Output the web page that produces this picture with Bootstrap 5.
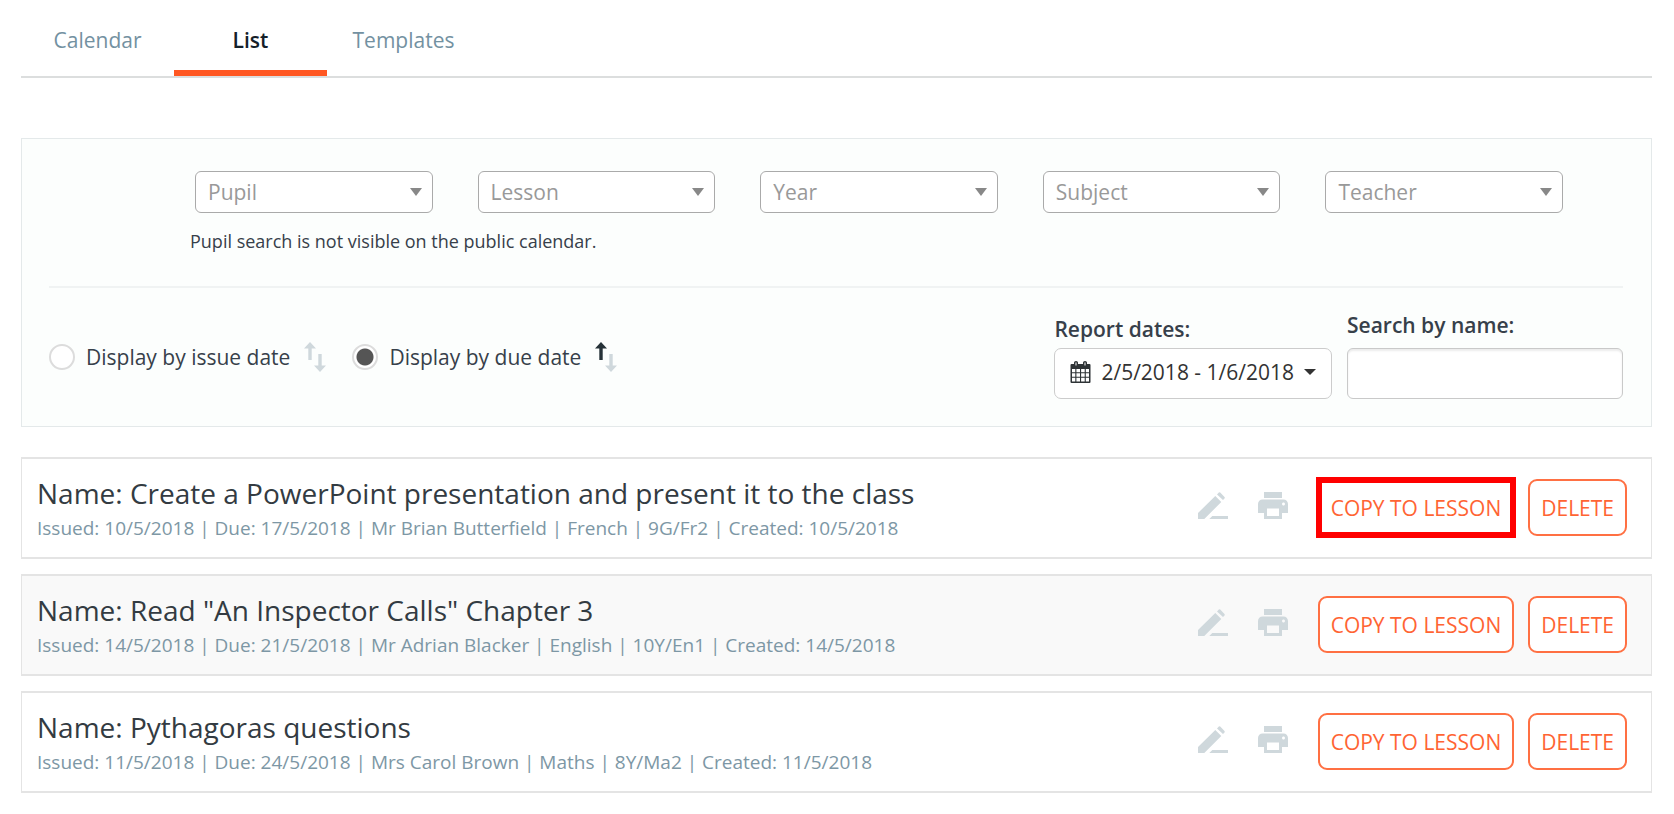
<!DOCTYPE html>
<html lang="en">
<head>
<meta charset="utf-8">
<meta name="viewport" content="width=device-width, initial-scale=1">
<title>Homework list</title>
<link rel="stylesheet" href="https://cdn.jsdelivr.net/npm/bootstrap@5.3.0/dist/css/bootstrap.min.css">
<style>
  body { font-family: "Open Sans", sans-serif; font-size: 21px; line-height: 28px; color: #37404a; background: #fff; }
  .page { padding: 0 22px 21px 21px; }

  /* Tabs */
  .view-tabs { border-bottom: 2px solid #dcdede; margin-bottom: 60px; }
  .view-tabs .nav-link { width: 153px; height: 76px; padding: 26px 0 0; text-align: center; font-size: 21px; color: #7391a1; border-bottom: 6px solid transparent; border-radius: 0; }
  .view-tabs .nav-link.active { color: #14202a; font-weight: 600; border-bottom-color: #ff5722; }

  /* Filter panel */
  .filters { background: #fcfefd; border: 1px solid #e4e9ea; padding: 32px 28px 27px 27px; margin-bottom: 30px; }
  .filter-fields { display: grid; grid-template-columns: repeat(5, 1fr); gap: 45px; padding: 0 60px 0 146px; }
  .filter-fields .form-select { height: 42px; padding: 2px 40px 0 12px; border: 1px solid #aaa; border-radius: 6px; font-size: 21px; color: #999; background-color: #fff; background-image: url("data:image/svg+xml,%3Csvg xmlns='http://www.w3.org/2000/svg' viewBox='0 0 12 8'%3E%3Cpath d='M0 0h12L6 8z' fill='%23888'/%3E%3C/svg%3E"); background-size: 12px 8px; background-position: right 10px center; }
  .hint { margin: 13px 0 0 141px; font-size: 18px; line-height: 30px; }
  .rule { height: 2px; margin: 30px 0 23px; background: #f0f3f3; }
  .sort-picks { gap: 26px; }
  .pick .form-check-input { width: 26px; height: 26px; margin: 0 11px 0 0; border: 2px solid #dcdcdc; background-color: #fff; }
  .pick .form-check-input:checked { background-image: radial-gradient(circle, #555 8px, transparent 9px); }
  .pick svg { margin-left: 14px; }
  .lookup { gap: 15px; }
  .field-name { font-weight: 600; margin-bottom: 9px; }
  .range-name { margin-bottom: 5px; }
  .range-btn { height: 51px; padding: 0 15px 3px; gap: 10px; border: 1px solid #ccc; border-radius: 7px; background: #fff; font-size: 21px; color: #333; }
  .search-col { width: 276px; }
  .search-col .form-control { height: 51px; border: 1px solid #c9c9c9; border-radius: 6px; box-shadow: inset 0 2px 2px rgba(0,0,0,.08); }

  /* Homework entries */
  .entry { border: 1px solid #e4e4e4; border-width: 2px 1px; padding: 13px 24px 14px 15px; margin-bottom: 15px; background: #fff; }
  .entry:nth-child(even) { background: #f9f9f9; }
  .entry h2 { margin: 0; font-size: 28px; line-height: 42px; font-weight: 400; color: #333b42; }
  .entry p { margin: 0; font-size: 19px; line-height: 29px; color: #7d97a5; }
  .tool { padding: 0; border: 0; background: none; color: #cfd8dc; line-height: 0; }
  .tool-set { gap: 30px; padding: 0 30px 4px 0; }
  .entry-actions { gap: 14px; }
  .act { height: 57px; padding: 0 11px; border: 2px solid #ff7043; border-radius: 9px; background: #fff; color: #ff6433; font-size: 21px; white-space: nowrap; }
  .act-marked { outline: 6px solid #f00; outline-offset: -4px; border-color: transparent; border-radius: 0; }
</style>
</head>
<body>
<svg width="0" height="0" class="d-none" aria-hidden="true">
  <symbol id="pencil" viewBox="0 0 30 27"><path fill="currentColor" d="M0 27v-6L17.300 4l6 6-17 17zM19 2.500l1.800-1.900q.7-.6 1.400 0L26.500 5q.6.700 0 1.400L25 8zM11.300 27l3-3H30v3z"/></symbol>
  <symbol id="printer" viewBox="2 3 20 18"><path fill="currentColor" d="M19 8H5c-1.660 0-3 1.340-3 3v6h4v4h12v-4h4v-6c0-1.660-1.340-3-3-3zm-3 11H8v-5h8v5zm3-7c-.55 0-1-.45-1-1s.45-1 1-1 1 .45 1 1-.45 1-1 1zm-1-9H6v4h12V3z"/></symbol>
  <symbol id="arrow-up" viewBox="0 0 12 18"><path fill="currentColor" d="M6 0l6 6.500H7.700V18H4.300V6.500H0z"/></symbol>
</svg>
<main class="page">
  <nav class="nav view-tabs" aria-label="Views">
    <a class="nav-link" href="#">Calendar</a>
    <a class="nav-link active" href="#" aria-current="page">List</a>
    <a class="nav-link" href="#">Templates</a>
  </nav>

  <form class="filters">
    <div class="filter-fields">
      <select class="form-select" aria-label="Pupil"><option>Pupil</option></select>
      <select class="form-select" aria-label="Lesson"><option>Lesson</option></select>
      <select class="form-select" aria-label="Year"><option>Year</option></select>
      <select class="form-select" aria-label="Subject"><option>Subject</option></select>
      <select class="form-select" aria-label="Teacher"><option>Teacher</option></select>
    </div>
    <p class="hint">Pupil search is not visible on the public calendar.</p>
    <div class="rule"></div>
    <div class="d-flex justify-content-between align-items-end">
      <div class="d-flex align-self-center pt-1 sort-picks">
        <div class="d-flex align-items-center pick">
          <input class="form-check-input" type="radio" name="order" id="issue">
          <label for="issue">Display by issue date</label>
          <svg width="22" height="30" aria-hidden="true" color="#cfd8dc"><use href="#arrow-up" width="12" height="18"/><use href="#arrow-up" width="12" height="18" transform="rotate(180 11 15)"/></svg>
        </div>
        <div class="d-flex align-items-center pick">
          <input class="form-check-input" type="radio" name="order" id="due" checked>
          <label for="due">Display by due date</label>
          <svg width="22" height="30" aria-hidden="true" color="#cfd8dc"><use href="#arrow-up" width="12" height="18" color="#263238"/><use href="#arrow-up" width="12" height="18" transform="rotate(180 11 15)"/></svg>
        </div>
      </div>
      <div class="d-flex align-items-end lookup">
        <div>
          <label class="field-name range-name d-block" for="range">Report dates:</label>
          <button type="button" class="range-btn d-flex align-items-center" id="range">
            <svg width="21" height="22" viewBox="0 0 20 22" aria-hidden="true"><path fill="#2e3336" fill-rule="evenodd" d="M2 3h1.500V1.500Q3.500 0 5.500 0T7.500 1.500V3h5V1.500Q12.500 0 14.500 0T16.500 1.500V3H19q1 0 1 1v17q0 1-1 1H1q-1 0-1-1V4q0-1 1-1zM1.500 8v3.300h3.300V8zm4.400 0v3.300h3.600V8zm4.700 0v3.300h3.600V8zm4.700 0v3.300h3.200V8zM1.500 12.300v3.400h3.300v-3.400zm4.400 0v3.400h3.600v-3.400zm4.700 0v3.400h3.600v-3.400zm4.700 0v3.400h3.200v-3.400zM1.500 16.700v3.800h3.300v-3.800zm4.400 0v3.800h3.600v-3.800zm4.700 0v3.800h3.600v-3.800zm4.700 0v3.800h3.200v-3.800zM5 1.500v3h1v-3zm9 0v3h1v-3z"/></svg>
            <span>2/5/2018 - 1/6/2018</span>
            <svg width="12" height="6" viewBox="0 0 12 6" aria-hidden="true"><path fill="#333" d="M0 0h12L6 6z"/></svg>
          </button>
        </div>
        <div class="search-col">
          <label class="field-name d-block" for="search">Search by name:</label>
          <input class="form-control" type="text" id="search">
        </div>
      </div>
    </div>
  </form>

  <section aria-label="Homework">
    <article class="entry d-flex align-items-center justify-content-between">
      <div>
        <h2>Name: Create a PowerPoint presentation and present it to the class</h2>
        <p>Issued: 10/5/2018 | Due: 17/5/2018 | Mr Brian Butterfield | French | 9G/Fr2 | Created: 10/5/2018</p>
      </div>
      <div class="d-flex align-items-center">
        <div class="d-flex tool-set">
          <button class="tool" aria-label="Edit"><svg width="30" height="27"><use href="#pencil"/></svg></button>
          <button class="tool" aria-label="Print"><svg width="30" height="27"><use href="#printer"/></svg></button>
        </div>
        <div class="d-flex entry-actions">
          <button class="act act-marked">COPY TO LESSON</button>
          <button class="act">DELETE</button>
        </div>
      </div>
    </article>
    <article class="entry d-flex align-items-center justify-content-between">
      <div>
        <h2>Name: Read "An Inspector Calls" Chapter 3</h2>
        <p>Issued: 14/5/2018 | Due: 21/5/2018 | Mr Adrian Blacker | English | 10Y/En1 | Created: 14/5/2018</p>
      </div>
      <div class="d-flex align-items-center">
        <div class="d-flex tool-set">
          <button class="tool" aria-label="Edit"><svg width="30" height="27"><use href="#pencil"/></svg></button>
          <button class="tool" aria-label="Print"><svg width="30" height="27"><use href="#printer"/></svg></button>
        </div>
        <div class="d-flex entry-actions">
          <button class="act">COPY TO LESSON</button>
          <button class="act">DELETE</button>
        </div>
      </div>
    </article>
    <article class="entry d-flex align-items-center justify-content-between">
      <div>
        <h2>Name: Pythagoras questions</h2>
        <p>Issued: 11/5/2018 | Due: 24/5/2018 | Mrs Carol Brown | Maths | 8Y/Ma2 | Created: 11/5/2018</p>
      </div>
      <div class="d-flex align-items-center">
        <div class="d-flex tool-set">
          <button class="tool" aria-label="Edit"><svg width="30" height="27"><use href="#pencil"/></svg></button>
          <button class="tool" aria-label="Print"><svg width="30" height="27"><use href="#printer"/></svg></button>
        </div>
        <div class="d-flex entry-actions">
          <button class="act">COPY TO LESSON</button>
          <button class="act">DELETE</button>
        </div>
      </div>
    </article>
  </section>
</main>
<script src="https://cdn.jsdelivr.net/npm/bootstrap@5.3.0/dist/js/bootstrap.bundle.min.js"></script>
</body>
</html>
